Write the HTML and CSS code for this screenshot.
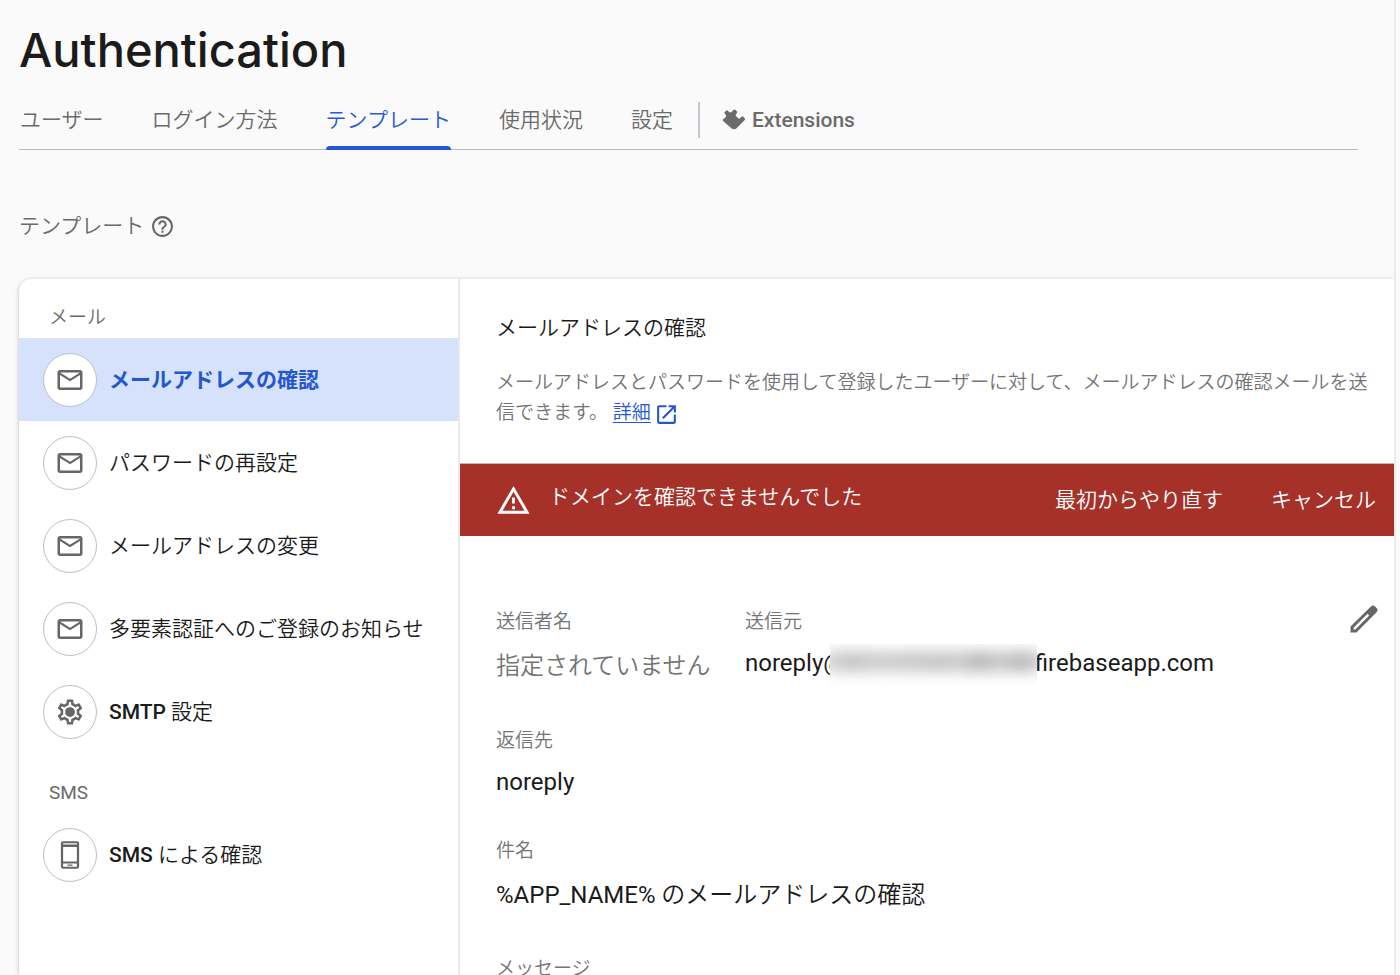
FILE: index.html
```html
<!DOCTYPE html>
<html lang="ja">
<head>
<meta charset="utf-8">
<title>Authentication</title>
<link rel="stylesheet" href="styles.css">
</head>
<body>
<svg class="sprite" aria-hidden="true">
  <symbol id="mail" viewBox="0 0 24 24"><path d="M22 6c0-1.100-.9-2-2-2H4c-1.100 0-2 .9-2 2v12c0 1.100.9 2 2 2h16c1.100 0 2-.9 2-2V6zm-2 0-8 5-8-5h16zm0 12H4V8l8 5 8-5v10z"/></symbol>
  <symbol id="gear" viewBox="0 0 24 24"><path d="M19.430 12.980c.04-.32.07-.64.07-.98s-.03-.66-.07-.98l2.110-1.650c.19-.15.24-.42.12-.64l-2-3.460c-.09-.16-.26-.25-.44-.25-.06 0-.12.01-.17.03l-2.490 1c-.52-.4-1.080-.73-1.690-.98l-.38-2.650C14.460 2.180 14.250 2 14 2h-4c-.25 0-.46.18-.49.42l-.38 2.650c-.61.25-1.170.59-1.690.98l-2.490-1c-.06-.02-.12-.03-.18-.03-.17 0-.34.09-.43.25l-2 3.460c-.13.22-.07.49.12.64l2.110 1.650c-.04.32-.07.65-.07.98s.03.66.07.98l-2.110 1.650c-.19.15-.24.42-.12.64l2 3.460c.09.16.26.25.44.25.06 0 .12-.01.17-.03l2.490-1c.52.4 1.080.73 1.690.98l.38 2.650c.03.24.24.42.49.42h4c.25 0 .46-.18.49-.42l.38-2.650c.61-.25 1.170-.59 1.690-.98l2.490 1c.06.02.12.03.18.03.17 0 .34-.09.43-.25l2-3.460c.12-.22.07-.49-.12-.64l-2.110-1.650zm-1.980-1.710c.04.31.05.52.05.73s-.02.43-.05.73l-.14 1.130.89.7 1.080.84-.7 1.210-1.270-.51-1.040-.42-.9.68c-.43.32-.84.56-1.250.73l-1.060.43-.16 1.130-.2 1.350h-1.400l-.19-1.350-.16-1.130-1.060-.43c-.43-.18-.83-.41-1.230-.71l-.91-.7-1.060.43-1.270.51-.7-1.210 1.080-.84.89-.7-.14-1.130c-.03-.31-.05-.54-.05-.74s.02-.43.05-.73l.14-1.130-.89-.7-1.080-.84.7-1.210 1.270.51 1.040.42.9-.68c.43-.32.84-.56 1.250-.73l1.060-.43.16-1.130.2-1.350h1.390l.19 1.350.16 1.130 1.060.43c.43.18.83.41 1.230.71l.91.7 1.060-.43 1.270-.51.7 1.210-1.070.85-.89.7.14 1.130z"/><circle cx="12" cy="12" r="3.900"/></symbol>
  <symbol id="phone" viewBox="0 0 24 24"><path fill-rule="evenodd" d="M6.500 1h11A1.800 1.800 0 0 1 19.300 2.800v18.400A1.800 1.800 0 0 1 17.500 23h-11a1.800 1.800 0 0 1-1.800-1.800V2.800A1.800 1.800 0 0 1 6.500 1zM6.500 2.600v1h11v-1zM6.500 5.500v11.600h11V5.500zM6.500 18.700v2.700h11v-2.700zM10 19.500h4v1.100h-4z"/></symbol>
</svg>
<div class="page">
  <header class="header">
    <h1 class="title">Authentication</h1>
    <nav class="tabs">
      <a class="tab" href="#users">ユーザー</a>
      <a class="tab" href="#providers">ログイン方法</a>
      <a class="tab active" href="#templates" aria-current="page">テンプレート</a>
      <a class="tab" href="#usage">使用状況</a>
      <a class="tab" href="#settings">設定</a>
      <a class="tab extensions" href="#extensions">
        <svg class="ext-icon" viewBox="0 0 24 24" aria-hidden="true"><path d="M2.600 5.400Q1.900 4.600 2.700 3.900L4.200 2.700Q5.100 2 5.900 2.800L7.100 4.100Q8.600 5 9.700 3.700L11.700 1.800Q12.700 1.100 13.600 2L15 3.500Q15.600 4.300 14.900 5L13.900 6.200Q13.300 7.300 14.200 8.300L16.200 10.300Q17.200 11 18 10.200L19.600 8.600Q20.500 7.900 21.300 8.700L22.700 10.200Q23.400 11.100 22.700 12L14.600 20.200Q12 22.500 9.400 20.200L1.100 13Q.4 12 1.200 11.200L3.600 9.200Q4.500 8 3.700 6.800z"/></svg>
        <span>Extensions</span>
      </a>
    </nav>
  </header>
  <div class="section-title">
    <h2>テンプレート</h2>
    <button class="icon-button" aria-label="ヘルプ"><svg class="help-icon" viewBox="0 0 24 24"><path d="M11 18h2v-2h-2v2zm1-16C6.480 2 2 6.480 2 12s4.480 10 10 10 10-4.480 10-10S17.520 2 12 2zm0 18c-4.410 0-8-3.590-8-8s3.590-8 8-8 8 3.590 8 8-3.590 8-8 8zm0-14c-2.210 0-4 1.790-4 4h2c0-1.100.9-2 2-2s2 .9 2 2c0 2-3 1.750-3 5h2c0-2.250 3-2.500 3-5 0-2.210-1.790-4-4-4z"/></svg></button>
  </div>
  <main class="card">
    <aside class="sidebar">
      <h3 class="group">メール</h3>
      <button class="item selected"><span class="badge"><svg><use href="#mail"/></svg></span><span>メールアドレスの確認</span></button>
      <button class="item"><span class="badge"><svg><use href="#mail"/></svg></span><span>パスワードの再設定</span></button>
      <button class="item"><span class="badge"><svg><use href="#mail"/></svg></span><span>メールアドレスの変更</span></button>
      <button class="item"><span class="badge"><svg><use href="#mail"/></svg></span><span>多要素認証へのご登録のお知らせ</span></button>
      <button class="item"><span class="badge"><svg><use href="#gear"/></svg></span><span><b>SMTP</b> 設定</span></button>
      <h3 class="group sms">SMS</h3>
      <button class="item"><span class="badge"><svg><use href="#phone"/></svg></span><span><b>SMS</b> による確認</span></button>
    </aside>
    <section class="content">
      <div class="intro">
        <h2 class="heading">メールアドレスの確認</h2>
        <p class="description">メールアドレスとパスワードを使用して登録したユーザーに対して、メールアドレスの確認メールを送信できます。 <a class="link" href="#details">詳細<svg viewBox="0 0 24 24" aria-hidden="true"><path d="M19 19H5V5h7V3H5c-1.110 0-2 .9-2 2v14c0 1.100.89 2 2 2h14c1.100 0 2-.9 2-2v-7h-2v7zM14 3v2h3.590l-9.830 9.830 1.410 1.410L19 6.410V10h2V3h-7z"/></svg></a></p>
      </div>
      <div class="banner" role="alert">
        <svg class="warning" viewBox="0 0 24 24" aria-hidden="true"><path d="M12 5.990 19.530 19H4.470L12 5.990M12 2 1 21h22L12 2zm1 14h-2v2h2v-2zm0-6h-2v4h2v-4z"/></svg>
        <span class="banner-text">ドメインを確認できませんでした</span>
        <button class="banner-button">最初からやり直す</button>
        <button class="banner-button">キャンセル</button>
      </div>
      <div class="fields">
        <div class="row">
          <dl class="field"><dt>送信者名</dt><dd class="muted">指定されていません</dd></dl>
          <dl class="field sender"><dt>送信元</dt><dd><span class="latin">noreply@</span><span class="redacted"><i></i></span><span class="latin">firebaseapp.com</span></dd></dl>
          <button class="icon-button edit" aria-label="編集"><svg viewBox="0 0 24 24"><path fill-rule="evenodd" d="M2.500 17.300V21.500h4.200L20.900 7.200Q22.200 5.700 20.900 4.300L19.800 3.200Q18.300 1.900 16.900 3.200zM4.600 18.100 14.500 8.300 15.700 9.500 5.900 19.400H4.600z"/></svg></button>
        </div>
        <dl class="field reply"><dt>返信先</dt><dd><span class="latin">noreply</span></dd></dl>
        <dl class="field subject"><dt>件名</dt><dd><span class="latin">%APP_NAME%</span> のメールアドレスの確認</dd></dl>
        <dl class="field"><dt>メッセージ</dt></dl>
      </div>
    </section>
  </main>
</div>
</body>
</html>
```
FILE: styles.css
```css
* { box-sizing: border-box; }

body {
  margin: 0;
  background: #fafafa;
  color: #1b1b1b;
  font-family: Roboto, "Noto Sans CJK JP", sans-serif;
  font-size: 21px;
  font-weight: 350;
  line-height: 30px;
  overflow: hidden;
}

h1, h2, h3, p, dl, dd { margin: 0; font-weight: inherit; font-size: inherit; }
button { margin: 0; padding: 0; border: 0; background: none; font: inherit; color: inherit; cursor: pointer; }
svg { display: block; fill: currentColor; }
.sprite { display: none; }
.latin { font-weight: 400; }

.page {
  display: flex;
  flex-direction: column;
  height: 100vh;
  margin-right: 4px;
  border-right: 2px solid #ebebeb;
  overflow: hidden;
}

.header { padding: 20px 36px 0 19px; }
.title {
  font-family: Inter, sans-serif;
  font-size: 47px;
  font-weight: 500;
  line-height: 60px;
}

.tabs {
  display: flex;
  align-items: flex-end;
  gap: 48px;
  height: 70px;
  padding: 0 1px;
  border-bottom: 1px solid #b7bac5;
  color: #6b6b6b;
}
.tab {
  display: flex;
  align-items: center;
  height: 59px;
  color: inherit;
  text-decoration: none;
}
.tab.active {
  position: relative;
  color: #2a5bd7;
}
.tab.active::after {
  content: "";
  position: absolute;
  right: 0;
  bottom: -1px;
  left: 0;
  height: 4px;
  border-radius: 4px 4px 0 0;
  background: #2457cf;
}
.extensions {
  margin-left: -23px;
  gap: 6px;
  font-weight: 500;
}
.extensions::before {
  content: "";
  width: 2px;
  height: 36px;
  margin-right: 16px;
  background: #c3c7d3;
}
.ext-icon { width: 24px; height: 24px; }

.section-title {
  display: flex;
  align-items: center;
  gap: 6px;
  padding: 61px 0 38px 19px;
  color: #6b6b6b;
}
.icon-button { color: #666; }
.help-icon { width: 25px; height: 25px; }

.card {
  display: flex;
  flex: 1;
  min-height: 0;
  margin-left: 19px;
  border-radius: 12px 0 0 0;
  background: #fff;
  box-shadow: 0 1px 4px rgba(0, 0, 0, .25);
}

.sidebar {
  flex: 0 0 441px;
  padding-top: 24px;
  border-right: 2px solid #e9eaef;
}
.group {
  padding: 0 30px;
  margin-bottom: 5px;
  color: #6b6b6b;
  font-size: 19px;
}
.group.sms { margin: 25px 0 5px; font-weight: 400; }
.item {
  display: flex;
  align-items: center;
  gap: 12px;
  width: 100%;
  height: 83px;
  padding: 0 24px;
  text-align: left;
  white-space: nowrap;
}
.item b { font-weight: 500; }
.item.selected { background: #d6e1fc; color: #2457cf; font-weight: 700; }
.badge {
  display: grid;
  place-items: center;
  width: 54px;
  height: 54px;
  border: 1px solid #b9bfcd;
  border-radius: 50%;
  background: #fff;
  color: #666;
}
.badge svg { width: 30px; height: 30px; }

.content { flex: 1; min-width: 0; }
.intro { padding: 34px 16px 35px 36px; }
.heading { margin-bottom: 25px; }
.description { color: #747474; font-size: 19px; }
.link { color: #2457cf; text-underline-offset: 3px; }
.link svg { display: inline-block; width: 25px; height: 25px; margin: -4px 0 -4px 3px; vertical-align: -4px; }

.banner {
  display: flex;
  align-items: center;
  gap: 48px;
  height: 73px;
  padding: 0 18px 0 36px;
  border-top: 1px solid #c3b5bd;
  background: #a53128;
  color: #fff;
}
.warning { width: 35px; height: 35px; margin-right: -30px; }
.banner-text { flex: 1; padding-bottom: 6px; }

.fields { padding: 71px 13px 0 36px; }
.row { display: flex; align-items: flex-start; margin-bottom: 45px; }
.row .field { flex: 0 0 249px; }
.row .sender { flex: 1; }
dt { color: #747474; font-size: 19px; }
dd { margin-top: 11px; font-size: 24px; white-space: nowrap; }
dd.muted { margin-top: 14px; color: #747474; }
.edit { margin-top: -5px; }
.edit svg { width: 34px; height: 34px; }
.reply { margin-bottom: 39px; }
.subject { margin-bottom: 44px; }
.subject dd { margin-top: 14px; }

.redacted {
  display: inline-flex;
  position: relative;
  width: 207px;
  height: 42px;
  margin: -8px -2px -8px -15px;
  overflow: hidden;
  background: #fff;
  vertical-align: middle;
}
.redacted i {
  flex: 1;
  height: 21px;
  margin: 7px -8px 0;
  background: linear-gradient(90deg, #ddd, #c4c4c4 12%, #cecece 25%, #c6c6c6 55%, #ccc 62%, #b6b6b6 70%, #cbcbcb 80%, #b6b6b6 90%, #ddd);
  filter: blur(7px);
}
```
